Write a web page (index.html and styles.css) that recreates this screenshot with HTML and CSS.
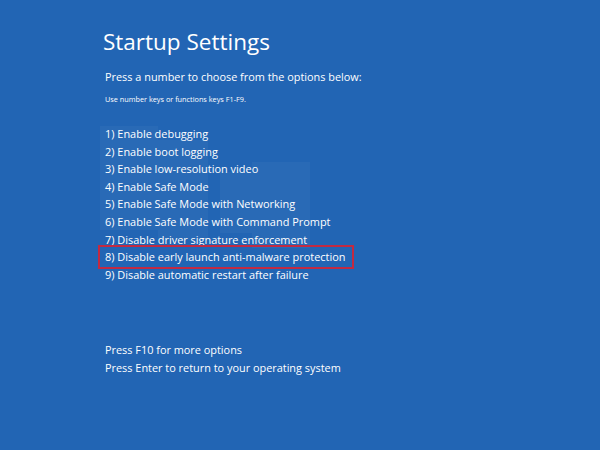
FILE: index.html
```html
<!DOCTYPE html>
<html>
<head>
<meta charset="utf-8">
<link rel="stylesheet" href="styles.css">
</head>
<body>
<div class="screen">
  <div class="watermark">
    <div class="wm wm1"></div>
    <div class="wm wm2"></div>
    <div class="wm wm3"></div>
    <div class="wm wm4"></div>
  </div>
  <div class="content">
    <h1 class="title">Startup Settings</h1>
    <p class="prompt">Press a number to choose from the options below:</p>
    <p class="hint">Use number keys or functions keys F1-F9.</p>
    <ul class="options">
      <li>1) Enable debugging</li>
      <li>2) Enable boot logging</li>
      <li>3) Enable low-resolution video</li>
      <li>4) Enable Safe Mode</li>
      <li>5) Enable Safe Mode with Networking</li>
      <li>6) Enable Safe Mode with Command Prompt</li>
      <li>7) Disable driver signature enforcement</li>
      <li class="selected">8) Disable early launch anti-malware protection</li>
      <li>9) Disable automatic restart after failure</li>
    </ul>
    <div class="footer">
      <p>Press F10 for more options</p>
      <p>Press Enter to return to your operating system</p>
    </div>
  </div>
</div>
</body>
</html>
```

FILE: styles.css
```css
html, body {
  margin: 0;
  padding: 0;
}
body {
  width: 600px;
  height: 450px;
  overflow: hidden;
  background: #2265b4;
  font-family: "Open Sans", "Noto Sans", sans-serif;
  color: #ffffff;
}
.screen {
  position: relative;
  width: 600px;
  height: 450px;
  background: #2265b4;
}
.watermark {
  position: absolute;
  inset: 0;
  pointer-events: none;
}
.wm {
  position: absolute;
  background: rgba(255, 255, 255, 0.035);
}
.wm1 { left: 100px; top: 126px; width: 58px; height: 104px; }
.wm2 { left: 158px; top: 140px; width: 50px; height: 100px; }
.wm3 { left: 220px; top: 172px; width: 32px; height: 61px; }
.wm4 { left: 252px; top: 162px; width: 58px; height: 86px; }
.content {
  position: relative;
  padding: 26px 0 0 103px;
}
.title {
  margin: 0;
  font-weight: 400;
  font-size: 22.5px;
  line-height: 32px;
}
.prompt {
  margin: 11px 0 0 2px;
  font-size: 10.9px;
  line-height: 16px;
}
.hint {
  margin: 8px 0 0 2px;
  font-size: 7.3px;
  line-height: 12px;
}
.options {
  list-style: none;
  margin: 20px 0 0 0;
  padding: 0;
}
.options li {
  font-size: 10.95px;
  line-height: 17.6px;
  padding-left: 2px;
  white-space: nowrap;
}
.options li.selected {
  width: max-content;
  margin: 0 0 0 -2px;
  padding: 0 6px 0 4px;
  outline: 2px solid #c22a42;
  outline-offset: 1px;
}
.footer {
  margin-top: 58px;
}
.footer p {
  margin: 0 0 0 2px;
  font-size: 10.9px;
  line-height: 17.6px;
}
```
